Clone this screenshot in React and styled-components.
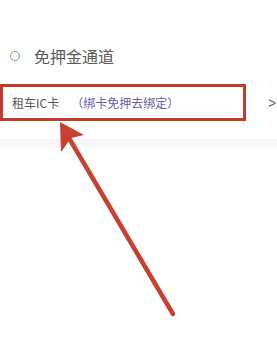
import React from 'react';
import styled, { createGlobalStyle } from 'styled-components';

export default function App() {
  return (
    <Page>
      <GlobalStyle />
      <Section>
        <SectionTitle>
          <Dot />
          <span>免押金通道</span>
        </SectionTitle>
        <Row>
          <Highlight>
            <Label>租车IC卡</Label>
            <Hint>（绑卡免押去绑定）</Hint>
          </Highlight>
          <Chevron>&gt;</Chevron>
        </Row>
      </Section>
      <Divider />
      <Arrow width="277" height="351" viewBox="0 0 277 351">
        <line x1="173" y1="314" x2="66" y2="133" stroke="#c8402f" strokeWidth="4.5" strokeLinecap="round" />
        <polygon points="60,122 84,135 71,138 61,152" fill="#c8402f" />
      </Arrow>
    </Page>
  );
}

const GlobalStyle = createGlobalStyle`
  * {
    margin: 0;
    padding: 0;
    box-sizing: border-box;
  }
  body {
    background: #fff;
    font-family: 'Noto Sans CJK SC', 'Noto Sans', sans-serif;
  }
`;

const Page = styled.div`
  position: relative;
  width: 277px;
  height: 351px;
  overflow: hidden;
  background: #fff;
`;

const Section = styled.div`
  padding-top: 44px;
`;

const SectionTitle = styled.div`
  display: flex;
  align-items: center;
  height: 24px;
  padding-left: 10px;
  font-size: 16px;
  color: #5a5a5a;
  gap: 14px;
`;

const Dot = styled.i`
  display: block;
  width: 10px;
  height: 10px;
  border: 1.5px solid #6da86d;
  border-radius: 50%;
`;

const Row = styled.div`
  display: flex;
  align-items: center;
  margin-top: 16px;
`;

const Highlight = styled.div`
  display: flex;
  align-items: center;
  width: 246px;
  height: 37px;
  padding-left: 9px;
  border: 3.5px solid #c23c2c;
  font-size: 12px;
  white-space: nowrap;
`;

const Label = styled.span`
  color: #555;
`;

const Hint = styled.span`
  margin-left: 12px;
  color: #6660a6;
`;

const Chevron = styled.span`
  margin-left: 22px;
  font-size: 14px;
  color: #666;
  font-family: 'Liberation Sans', sans-serif;
`;

const Divider = styled.div`
  margin-top: 18px;
  height: 10px;
  background: linear-gradient(#f4f4f4, #fafafa);
`;

const Arrow = styled.svg`
  position: absolute;
  left: 0;
  top: 0;
  pointer-events: none;
`;
